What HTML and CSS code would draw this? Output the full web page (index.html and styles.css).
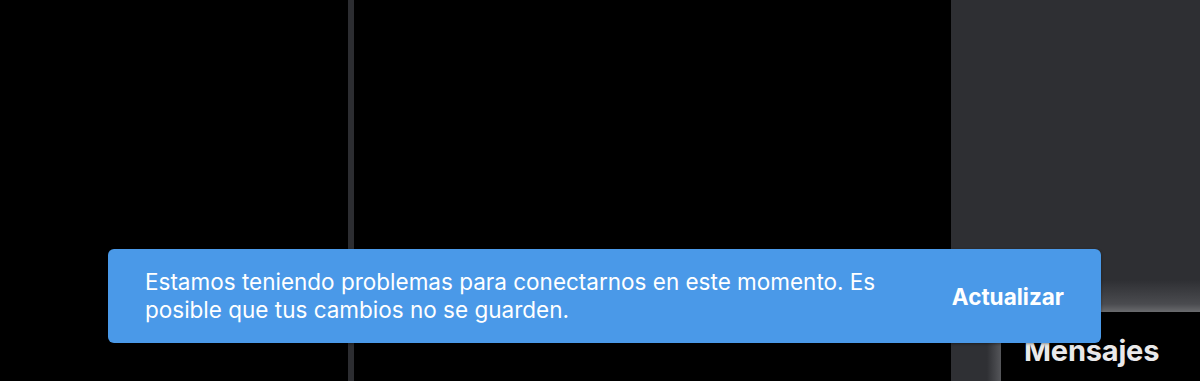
FILE: index.html
```html
<!DOCTYPE html>
<html lang="es">
<head>
    <meta charset="utf-8">
    <title>Mensajes</title>
    <link rel="stylesheet" href="styles.css">
</head>
<body>
    <div class="app">
        <div class="col-left"></div>
        <div class="divider"></div>
        <div class="col-main"></div>
        <div class="col-side">
            <div class="side-panel"></div>
            <div class="side-bottom">
                <div class="side-strip"></div>
                <div class="side-title">Mensajes</div>
            </div>
        </div>
    </div>

    <div class="toast">
        <p class="toast-text">Estamos teniendo problemas para conectarnos en este momento. Es posible que tus cambios no se guarden.</p>
        <button class="toast-action" type="button">Actualizar</button>
    </div>
</body>
</html>
```

FILE: styles.css
```css
html, body {
    margin: 0;
    height: 100%;
    background: #000;
    font-family: Inter, "Noto Sans", sans-serif;
    overflow: hidden;
}
.app {
    display: flex;
    height: 381px;
}
.col-left {
    width: 348px;
    background: #000;
}
.divider {
    width: 6px;
    background: #2c2d31;
}
.col-main {
    width: 597px;
    background: #000;
}
.col-side {
    flex: 1;
    display: grid;
    grid-template-rows: 312px 1fr;
}
.side-panel {
    background: linear-gradient(to bottom, #2e2f33 0, #2e2f33 280px, #4a4b4f 304px, #6a6b6e 312px);
}
.side-bottom {
    display: flex;
    background: #000;
}
.side-strip {
    width: 50px;
    background: linear-gradient(to right, #2f3034 0, #2f3034 36px, #55565a 50px);
}
.side-title {
    padding: 21px 0 0 23px;
    color: #e9e9ea;
    font-size: 29px;
    font-weight: 700;
    line-height: 35px;
    letter-spacing: -0.2px;
}
.toast {
    position: absolute;
    left: 108px;
    top: 249px;
    width: 993px;
    height: 94px;
    box-sizing: border-box;
    padding: 0 37px;
    display: flex;
    align-items: center;
    gap: 40px;
    background: #4a99e8;
    border-radius: 6px;
    box-shadow: 0 1px 3px rgba(0, 0, 0, 0.4);
}
.toast-text {
    flex: 1;
    margin: 0;
    color: #fff;
    font-size: 22.5px;
    line-height: 28px;
}
.toast-action {
    border: 0;
    padding: 0;
    background: none;
    color: #fff;
    font-family: inherit;
    font-size: 22.5px;
    font-weight: 700;
    cursor: pointer;
}
```
